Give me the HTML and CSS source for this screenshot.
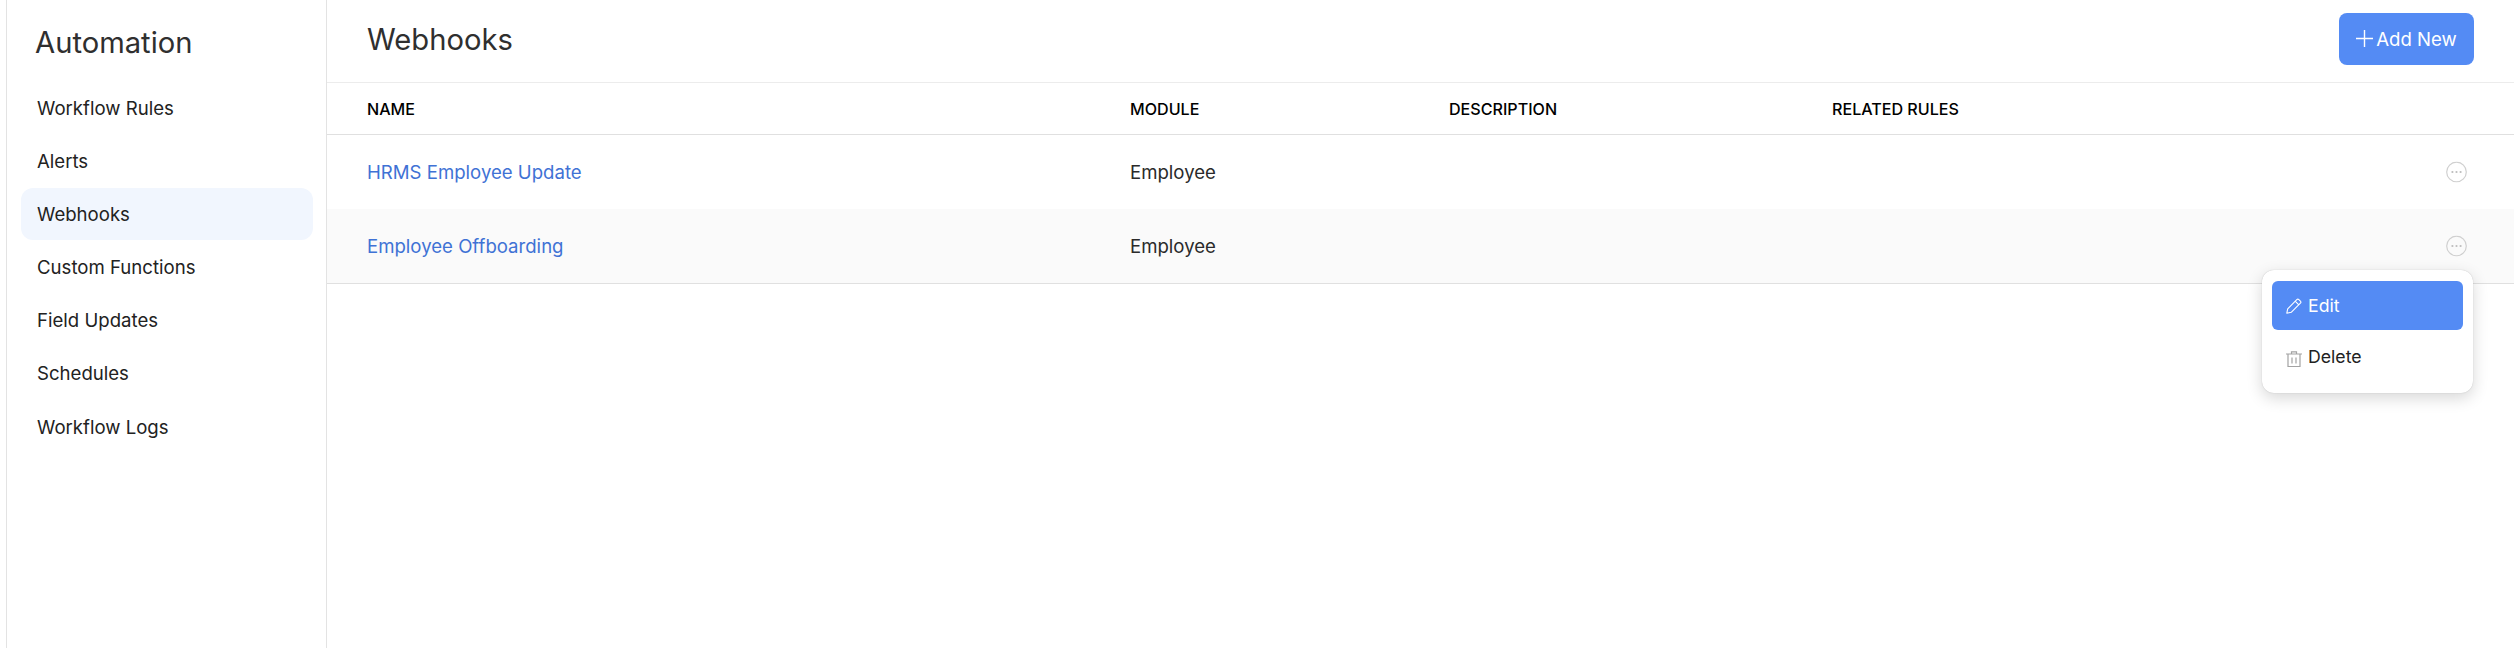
FILE: index.html
```html
<!DOCTYPE html>
<html lang="en">
<head>
<meta charset="utf-8">
<title>Webhooks</title>
<link rel="stylesheet" href="styles.css">
</head>
<body>
<div class="app">
  <aside class="sidebar">
    <h2 class="side-title">Automation</h2>
    <nav class="side-nav">
      <a class="side-item">Workflow Rules</a>
      <a class="side-item">Alerts</a>
      <a class="side-item active">Webhooks</a>
      <a class="side-item">Custom Functions</a>
      <a class="side-item">Field Updates</a>
      <a class="side-item">Schedules</a>
      <a class="side-item">Workflow Logs</a>
    </nav>
  </aside>
  <main class="main">
    <header class="topbar">
      <h1 class="page-title">Webhooks</h1>
      <button class="add-btn">
        <svg class="plus" viewBox="0 0 17 17" width="17" height="17"><path d="M8.5 0v17M0 8.5h17" fill="none" stroke="#fff" stroke-width="1.4"/></svg>
        <span>Add New</span>
      </button>
    </header>
    <div class="row head">
      <div>NAME</div><div>MODULE</div><div>DESCRIPTION</div><div>RELATED RULES</div>
    </div>
    <div class="row body">
      <div class="link">HRMS Employee Update</div><div>Employee</div><div></div><div></div>
      <svg class="more" viewBox="0 0 21 21" width="21" height="21"><circle cx="10.5" cy="10.5" r="9.8" fill="none" stroke="#d0d0d0" stroke-width="1.2"/><circle cx="6.4" cy="10.5" r="1.1" fill="#bdbdbd"/><circle cx="10.5" cy="10.5" r="1.1" fill="#bdbdbd"/><circle cx="14.6" cy="10.5" r="1.1" fill="#bdbdbd"/></svg>
    </div>
    <div class="row body alt">
      <div class="link">Employee Offboarding</div><div>Employee</div><div></div><div></div>
      <svg class="more" viewBox="0 0 21 21" width="21" height="21"><circle cx="10.5" cy="10.5" r="9.8" fill="none" stroke="#d0d0d0" stroke-width="1.2"/><circle cx="6.4" cy="10.5" r="1.1" fill="#bdbdbd"/><circle cx="10.5" cy="10.5" r="1.1" fill="#bdbdbd"/><circle cx="14.6" cy="10.5" r="1.1" fill="#bdbdbd"/></svg>
    </div>
    <div class="menu">
      <div class="menu-item selected">
        <svg viewBox="0 0 16 16" width="16" height="16"><path d="M.8 15.2l.9-4.4L10.8 1.6a1.5 1.5 0 0 1 2.1 0l1.5 1.5a1.5 1.5 0 0 1 0 2.1L5.2 14.3zM9.2 3.2l3.6 3.6" fill="none" stroke="#fff" stroke-width="1.1" stroke-linejoin="round"/></svg>
        <span>Edit</span>
      </div>
      <div class="menu-item">
        <svg class="trash" viewBox="0 0 16 16" width="16" height="16"><path d="M0 3h16M5.5 3V.8h5V3M2 3v12.5h12V3M6 6.5v6M10 6.5v6" fill="none" stroke="#a3a3a3" stroke-width="1.2"/></svg>
        <span>Delete</span>
      </div>
    </div>
  </main>
</div>
</body>
</html>
```
FILE: styles.css
```css
* { box-sizing: border-box; }
html, body { margin: 0; height: 100%; background: #fff; }
body { font-family: Inter, "Liberation Sans", sans-serif; color: #222; overflow: hidden; }
.app { display: flex; height: 648px; padding-left: 6px; }
.sidebar {
  width: 321px;
  flex: none;
  border-left: 1px solid #e3e3e3;
  border-right: 1px solid #e3e3e3;
  padding: 0 13px 0 14px;
}
.side-title {
  margin: 0;
  padding: 23px 0 0 14px;
  height: 81.5px;
  font-size: 29.2px;
  line-height: 40px;
  font-weight: 400;
  color: #2f2f2f;
}
.side-nav { display: flex; flex-direction: column; gap: 1.2px; }
.side-item {
  height: 52px;
  display: flex;
  align-items: center;
  padding-left: 16px;
  font-size: 18.6px;
  color: #222;
  border-radius: 12px;
}
.side-item.active { background: #f1f6fe; }
.main { flex: 1; position: relative; min-width: 0; }
.topbar {
  height: 83px;
  display: flex;
  align-items: center;
  justify-content: space-between;
  padding: 0 40px;
  border-bottom: 1px solid #ececec;
}
.page-title {
  margin: 0 0 3px;
  font-size: 29.2px;
  line-height: 40px;
  font-weight: 400;
  color: #2f2f2f;
}
.add-btn {
  width: 135px;
  height: 52px;
  margin-bottom: 5px;
  display: flex;
  align-items: center;
  justify-content: center;
  gap: 3px;
  border: 0;
  border-radius: 8px;
  background: #548bf4;
  color: #fff;
  font: 400 18.6px Inter, "Liberation Sans", sans-serif;
}
.row {
  position: relative;
  display: grid;
  grid-template-columns: 763px 319px 383px 1fr;
  align-items: center;
  padding-left: 40px;
}
.head {
  height: 52px;
  border-bottom: 1px solid #e0e0e0;
  font-size: 16.1px;
  font-weight: 500;
  color: #000;
}
.body { height: 74px; padding-bottom: 1px; font-size: 18.6px; color: #2a2a2a; }
.alt { background: #fafafa; height: 75px; border-bottom: 1px solid #e0e0e0; }
.link { color: #3f72d5; }
.more { position: absolute; right: 47px; top: 50%; transform: translateY(-50%); }
.menu {
  position: absolute;
  left: 1935px;
  top: 270px;
  width: 211px;
  height: 123px;
  padding: 11px 10px;
  background: #fff;
  border-radius: 12px;
  box-shadow: 0 0 1px rgba(0,0,0,.25), 0 5px 16px rgba(0,0,0,.16);
}
.menu-item {
  height: 49px;
  display: flex;
  align-items: center;
  gap: 6px;
  padding-left: 14px;
  border-radius: 6px;
  font-size: 17.7px;
  color: #222;
}
.menu-item.selected { background: #548bf4; color: #fff; }
.menu-item + .menu-item { margin-top: 2px; }
.trash { margin-top: 4px; }
.plus { flex: none; }
```
